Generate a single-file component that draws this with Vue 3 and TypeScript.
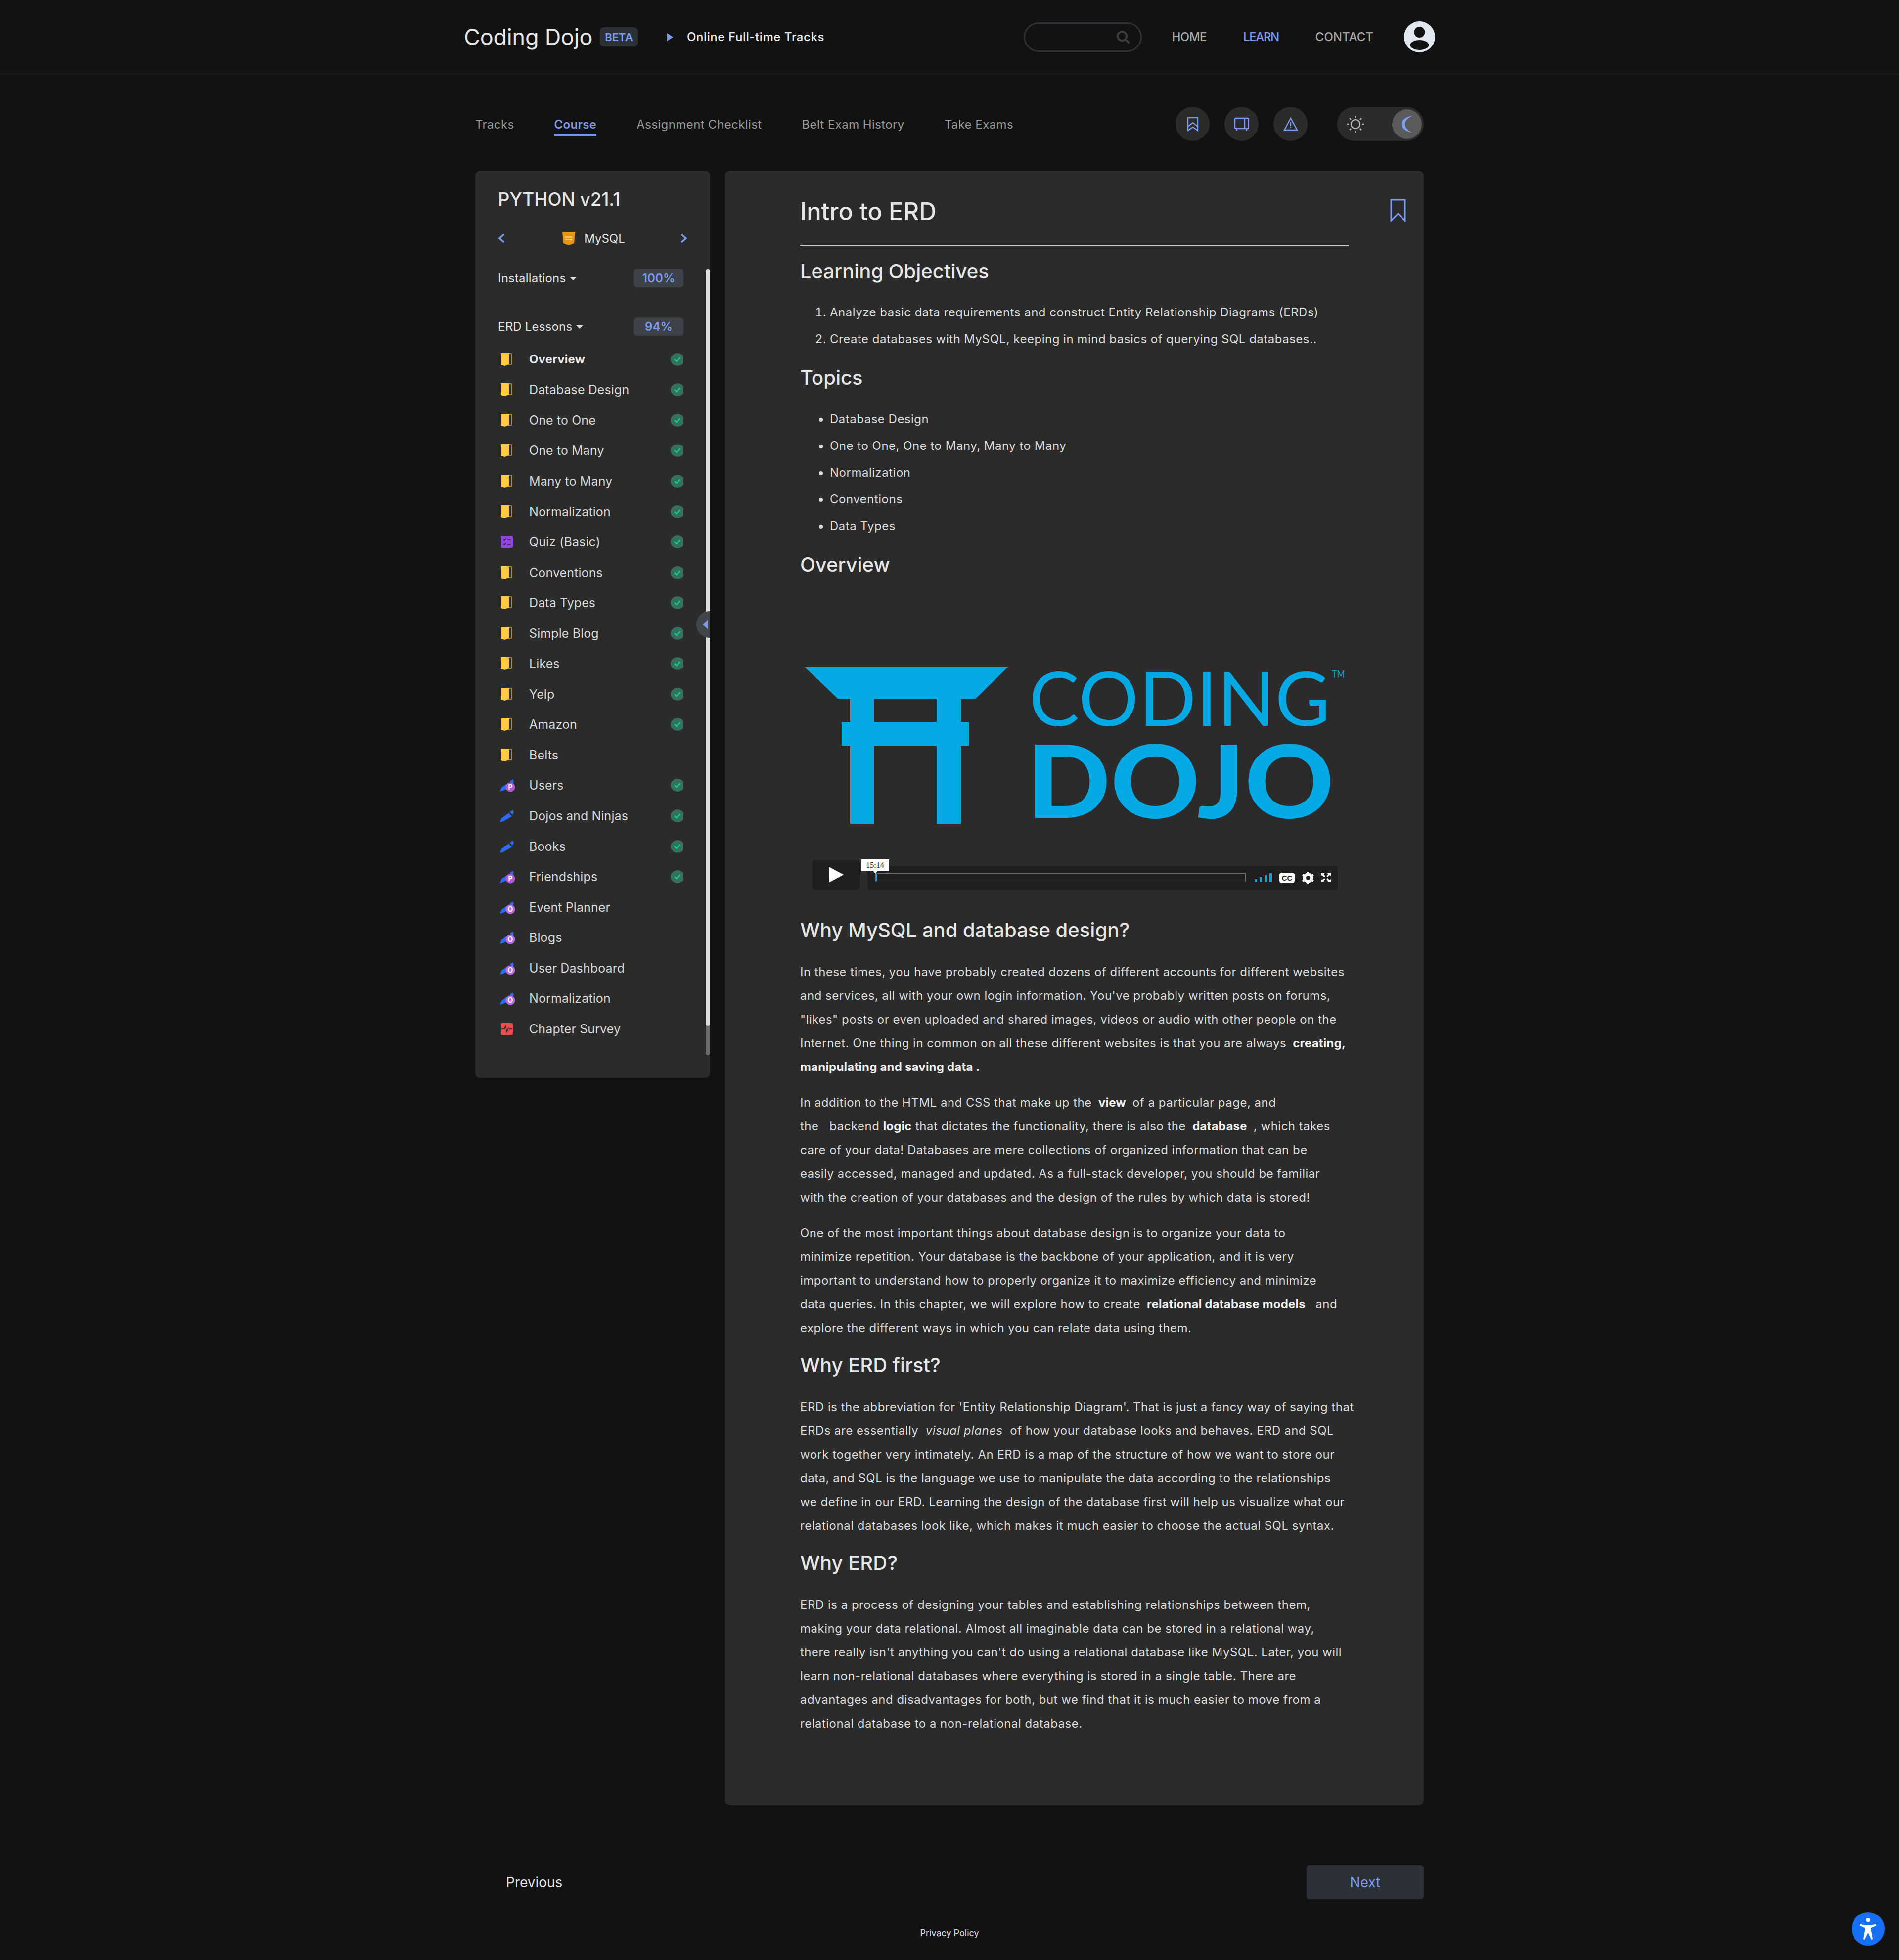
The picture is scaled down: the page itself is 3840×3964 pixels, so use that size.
<script setup lang="ts">
type Kind = 'door' | 'quiz' | 'pen' | 'penP' | 'penO' | 'survey'
interface Lesson { name: string; kind: Kind; done: boolean; active?: boolean }
const lessons: Lesson[] = [
  { name: 'Overview', kind: 'door', done: true, active: true },
  { name: 'Database Design', kind: 'door', done: true },
  { name: 'One to One', kind: 'door', done: true },
  { name: 'One to Many', kind: 'door', done: true },
  { name: 'Many to Many', kind: 'door', done: true },
  { name: 'Normalization', kind: 'door', done: true },
  { name: 'Quiz (Basic)', kind: 'quiz', done: true },
  { name: 'Conventions', kind: 'door', done: true },
  { name: 'Data Types', kind: 'door', done: true },
  { name: 'Simple Blog', kind: 'door', done: true },
  { name: 'Likes', kind: 'door', done: true },
  { name: 'Yelp', kind: 'door', done: true },
  { name: 'Amazon', kind: 'door', done: true },
  { name: 'Belts', kind: 'door', done: false },
  { name: 'Users', kind: 'penP', done: true },
  { name: 'Dojos and Ninjas', kind: 'pen', done: true },
  { name: 'Books', kind: 'pen', done: true },
  { name: 'Friendships', kind: 'penP', done: true },
  { name: 'Event Planner', kind: 'penO', done: false },
  { name: 'Blogs', kind: 'penO', done: false },
  { name: 'User Dashboard', kind: 'penO', done: false },
  { name: 'Normalization', kind: 'penO', done: false },
  { name: 'Chapter Survey', kind: 'survey', done: false },
]
const tabs = ['Tracks', 'Course', 'Assignment Checklist', 'Belt Exam History', 'Take Exams']
const topics = ['Database Design', 'One to One, One to Many, Many to Many', 'Normalization', 'Conventions', 'Data Types']
</script>

<template>
  <div class="page">
    <header class="topbar">
      <div class="topbar-in">
        <span class="brand">Coding Dojo</span>
        <span class="beta">BETA</span>
        <svg class="crumb" width="12" height="16" viewBox="0 0 12 16"><path d="M0 0 L12 8 L0 16Z" fill="#7c9cf0" /></svg>
        <span class="track">Online Full-time Tracks</span>
        <div class="spacer"></div>
        <div class="search">
          <svg width="28" height="28" viewBox="0 0 28 28" fill="none" stroke="#3d3d3d" stroke-width="4"><circle cx="12" cy="12" r="9" /><path d="M19 19 L26 26" /></svg>
        </div>
        <nav class="nav">
          <span class="home">HOME</span><span class="on">LEARN</span><span>CONTACT</span>
        </nav>
        <svg class="avatar" width="63" height="63" viewBox="0 0 63 63"><circle cx="31.5" cy="31.5" r="31.5" fill="#e2e8f2" /><circle cx="31.5" cy="22" r="11" fill="#121212" /><ellipse cx="31.5" cy="48" rx="19" ry="10" fill="#121212" /></svg>
      </div>
    </header>

    <div class="wrap">
      <div class="tabs">
        <span v-for="t in tabs" :key="t" class="tab" :class="{ cur: t === 'Course' }">{{ t }}</span>
        <div class="spacer"></div>
        <div class="round">
          <svg width="24" height="30" viewBox="0 0 24 30" fill="none" stroke="#7c9cf0" stroke-width="2.4"><path d="M2 2 H22 V28 L12 21 L2 28Z" /><path d="M2 20 L12 12 L22 20" /></svg>
        </div>
        <div class="round">
          <svg width="30" height="28" viewBox="0 0 30 28" fill="none" stroke="#7c9cf0" stroke-width="2.4"><rect x="1" y="2" width="28" height="21" rx="2" /><path d="M21 2 V23 M5 23 V27 M25 23 V27" /></svg>
        </div>
        <div class="round">
          <svg width="30" height="28" viewBox="0 0 30 28" fill="none" stroke="#7c9cf0" stroke-width="2.4"><path d="M15 2 L28 26 H2Z" /><path d="M15 10 V18 M15 20 V22" /></svg>
        </div>
        <div class="toggle">
          <svg width="36" height="36" viewBox="0 0 36 36" fill="none" stroke="#b5b5b5" stroke-width="2.5"><circle cx="18" cy="18" r="9" /><path d="M18 1 V5 M18 31 V35 M1 18 H5 M31 18 H35 M6 6 L9 9 M27 27 L30 30 M30 6 L27 9 M6 30 L9 27" /></svg>
          <div class="knob">
            <svg width="24" height="36" viewBox="0 0 24 36"><path d="M23 1 C9 3 1 10 1 18 C1 26 9 33 22 35 C14 30 8 25 8 18 C8 11 14 6 23 1Z" fill="#7c9cf0" /></svg>
          </div>
        </div>
      </div>

      <div class="columns">
        <aside class="side">
          <h2 class="course">PYTHON v21.1</h2>
          <div class="chapter">
            <svg width="14" height="20" viewBox="0 0 14 20" fill="none" stroke="#7c9cf0" stroke-width="3.5"><path d="M12 2 L3 10 L12 18" /></svg>
            <div class="chapter-name">
              <svg width="26" height="27" viewBox="0 0 26 27"><path d="M0 0 H26 L24 23 L13 27 L2 23Z" fill="#e8960f" /><rect x="6" y="9" width="14" height="3" fill="#f3c880" /><rect x="6" y="14" width="14" height="3" fill="#f3c880" /></svg>
              <span>MySQL</span>
            </div>
            <svg width="14" height="20" viewBox="0 0 14 20" fill="none" stroke="#7c9cf0" stroke-width="3.5"><path d="M2 2 L11 10 L2 18" /></svg>
          </div>
          <div class="sect sect-first">
            <span class="sect-name">Installations <i class="caret"></i></span>
            <span class="pct">100%</span>
          </div>
          <div class="sect sect-second">
            <span class="sect-name">ERD Lessons <i class="caret"></i></span>
            <span class="pct">94%</span>
          </div>
          <ul class="lessons">
            <li v-for="(l, i) in lessons" :key="i" class="lesson" :class="{ active: l.active }">
              <span class="ico">
                <svg v-if="l.kind === 'door'" class="ico-door" width="22" height="28" viewBox="0 0 22 28"><path d="M15 2 H21 V24 H15" fill="none" stroke="#d9a92e" stroke-width="1.5" /><path d="M0 1 H16 V24 L8 27 L0 25Z" fill="#fdcb3e" /></svg>
                <svg v-else-if="l.kind === 'quiz'" class="ico-door" width="24" height="24" viewBox="0 0 24 24"><rect width="24" height="24" rx="2" fill="#9146dc" /><path d="M5 7 L7 9 L10 5 M5 16 L7 18 L10 14" fill="none" stroke="#2f2146" stroke-width="1.5" /><path d="M13 8 H20 M13 17 H20" stroke="#2f2146" stroke-width="1.5" /></svg>
                <svg v-else-if="l.kind === 'survey'" class="ico-door" width="24" height="24" viewBox="0 0 24 24"><rect width="24" height="24" rx="2" fill="#ef4c4f" /><path d="M1 12 H7 L9 6 L12 18 L15 10 L17 12 H23" fill="none" stroke="#2b2b2b" stroke-width="1.6" /></svg>
                <svg v-else width="32" height="28" viewBox="0 0 32 28">
                  <path d="M0 27 L3 19 L18 8 L24 15 L7 25Z M20 6 L26 2 L28 7 L25 12Z" fill="#2a6cf6" />
                  <g v-if="l.kind !== 'pen'">
                    <circle cx="21" cy="18" r="9.5" :fill="l.kind === 'penP' ? '#b05ad6' : '#b96be4'" />
                    <text x="21" y="23" text-anchor="middle" class="ico-letter">{{ l.kind === 'penP' ? 'P' : 'O' }}</text>
                  </g>
                </svg>
              </span>
              <span class="lname">{{ l.name }}</span>
              <span v-if="l.done" class="check">
                <svg width="14" height="12" viewBox="0 0 14 12" fill="none" stroke="#17d07f" stroke-width="2.6"><path d="M1 6 L5 10 L13 2" /></svg>
              </span>
            </li>
          </ul>
          <div class="sbar"><div class="sbar-thumb"></div></div>
          <div class="handle"><i></i></div>
        </aside>

        <main class="card">
          <svg class="mark" width="32" height="46" viewBox="0 0 32 46" fill="none" stroke="#7c9cf0" stroke-width="3"><path d="M2 2 H30 V44 L16 30 L2 44Z" /></svg>
          <h1>Intro to ERD</h1>
          <hr />
          <h2 class="first">Learning Objectives</h2>
          <ol>
            <li>Analyze basic data requirements and construct Entity Relationship Diagrams (ERDs)</li>
            <li>Create databases with MySQL, keeping in mind basics of querying SQL databases..</li>
          </ol>
          <h2>Topics</h2>
          <ul>
            <li v-for="t in topics" :key="t">{{ t }}</li>
          </ul>
          <h2>Overview</h2>
          <div class="video">
            <svg class="logo" width="1110" height="340" viewBox="0 0 1110 340">
              <g fill="#05a9e3">
                <polygon points="9,10 420,10 355,74 76,74" />
                <rect x="101" y="74" width="49" height="253" />
                <rect x="276" y="74" width="49" height="253" />
                <rect x="84" y="121" width="257" height="48" />
              </g>
              <text x="463" y="129" class="logo-coding" textLength="609" lengthAdjust="spacingAndGlyphs">CODING</text>
              <text x="458" y="315" class="logo-dojo" textLength="622" lengthAdjust="spacingAndGlyphs">DOJO</text>
              <text x="1075" y="32" class="logo-tm" textLength="27" lengthAdjust="spacingAndGlyphs">TM</text>
            </svg>
            <div class="player">
              <div class="play"><svg width="30" height="32" viewBox="0 0 30 32"><path d="M0 0 L30 16 L0 32Z" fill="#fff" /></svg></div>
              <div class="ctrl">
                <div class="scrub"><i></i></div>
                <div class="bars"><b class="b1"></b><b class="b2"></b><b class="b3"></b><b class="b4"></b></div>
                <span class="cc">CC</span>
                <svg class="gear" width="24" height="25" viewBox="0 0 24 25"><circle cx="12" cy="12.5" r="7.5" fill="none" stroke="#fff" stroke-width="5.5" /><path d="M12 0 V25 M1 6 L23 19 M23 6 L1 19" stroke="#fff" stroke-width="4" /><circle cx="12" cy="12.5" r="4" fill="#1f1f1f" /></svg>
                <svg class="full" width="20" height="18" viewBox="0 0 18 18" preserveAspectRatio="none" fill="#fff"><path d="M0 0 H7 L5 2 L8 6 L6 8 L2 4 L0 6Z M18 0 H11 L13 2 L10 6 L12 8 L16 4 L18 6Z M0 18 H7 L5 16 L8 12 L6 10 L2 14 L0 12Z M18 18 H11 L13 16 L10 12 L12 10 L16 14 L18 12Z" /></svg>
              </div>
              <div class="tip">15:14</div>
            </div>
          </div>
          <h2 class="after-video">Why MySQL and database design?</h2>
          <p>In these times, you have probably created dozens of different accounts for different websites<br />and services, all with your own login information. You've probably written posts on forums,<br />"likes" posts or even uploaded and shared images, videos or audio with other people on the<br />Internet. One thing in common on all these different websites is that you are always <b>&nbsp;creating,</b><br /><b>manipulating and saving data .</b></p>
          <p>In addition to the HTML and CSS that make up the <b>&nbsp;view&nbsp;</b> of a particular page, and<br />the &nbsp; backend <b>logic</b> that dictates the functionality, there is also the <b>&nbsp;database&nbsp;</b> , which takes<br />care of your data! Databases are mere collections of organized information that can be<br />easily accessed, managed and updated. As a full-stack developer, you should be familiar<br />with the creation of your databases and the design of the rules by which data is stored!</p>
          <p>One of the most important things about database design is to organize your data to<br />minimize repetition. Your database is the backbone of your application, and it is very<br />important to understand how to properly organize it to maximize efficiency and minimize<br />data queries. In this chapter, we will explore how to create <b>&nbsp;relational database models&nbsp;</b> &nbsp;and<br />explore the different ways in which you can relate data using them.</p>
          <h2>Why ERD first?</h2>
          <p>ERD is the abbreviation for 'Entity Relationship Diagram'. That is just a fancy way of saying that<br />ERDs are essentially <em>&nbsp;visual planes&nbsp;</em> of how your database looks and behaves. ERD and SQL<br />work together very intimately. An ERD is a map of the structure of how we want to store our<br />data, and SQL is the language we use to manipulate the data according to the relationships<br />we define in our ERD. Learning the design of the database first will help us visualize what our<br />relational databases look like, which makes it much easier to choose the actual SQL syntax.</p>
          <h2>Why ERD?</h2>
          <p>ERD is a process of designing your tables and establishing relationships between them,<br />making your data relational. Almost all imaginable data can be stored in a relational way,<br />there really isn't anything you can't do using a relational database like MySQL. Later, you will<br />learn non-relational databases where everything is stored in a single table. There are<br />advantages and disadvantages for both, but we find that it is much easier to move from a<br />relational database to a non-relational database.</p>
        </main>
      </div>

      <div class="pager">
        <span class="prev">Previous</span>
        <span class="next">Next</span>
      </div>
      <footer class="foot">Privacy Policy</footer>
    </div>

    <div class="a11y">
      <svg width="33" height="44" viewBox="0 0 33 44" fill="#fff"><ellipse cx="16.5" cy="4" rx="4" ry="4.5" /><path d="M0 12 C5 14 10 15 12 15 H21 C23 15 28 14 33 12 L33 16 L23 20 V26 L26 43 L23.5 44 L16.5 30 L9.5 44 L7 43 L10 26 V20 L0 16Z" /></svg>
    </div>
  </div>
</template>

<style scoped>
.page {
  position: relative;
  min-height: 3964px;
  background: #121212;
  color: #e2e2e2;
  font-family: Inter, "Noto Sans", sans-serif;
  overflow: hidden;
}
.spacer { flex: 1; }
.topbar { height: 150px; border-bottom: 1px solid #242424; box-sizing: border-box; }
.topbar-in {
  width: 1964px;
  margin: 0 auto;
  height: 149px;
  display: flex;
  align-items: center;
}
.brand { font-size: 45px; letter-spacing: -0.2px; color: #e6e6e6; width: 275px; white-space: nowrap; }
.beta {
  width: 77px; height: 39px; border-radius: 8px; background: #2b2f36; color: #7c9cf0;
  font-size: 22px; font-weight: 600; display: flex; align-items: center; justify-content: center;
}
.crumb { margin-left: 59px; }
.track { margin-left: 28px; font-size: 24px; font-weight: 500; color: #eee; letter-spacing: 0.6px; }
.search {
  width: 239px; height: 60px; border: 3px solid #2e3136; border-radius: 30px; box-sizing: border-box;
  display: flex; align-items: center; justify-content: flex-end; padding-right: 21px;
}
.nav { display: flex; gap: 74px; margin-left: 60px; font-size: 24px; font-weight: 500; color: #a8a8a8; }
.nav .home { letter-spacing: -0.5px; }
.nav .on { color: #7c9cf0; letter-spacing: -1.4px; }
.avatar { margin-left: 62px; }

.wrap { width: 1918px; margin: 0 auto; }
.tabs { display: flex; align-items: center; height: 69px; margin-top: 66px; }
.tab {
  margin-right: 81px; font-size: 24px; letter-spacing: 0.4px; color: #9a9a9a; height: 40px; line-height: 36px; position: relative;
  box-sizing: border-box; margin-top: 6px;
}
.tab.cur { color: #7c9cf0; font-weight: 600; letter-spacing: 0.3px; }
.tab.cur::after { content: ""; position: absolute; left: 0; right: 0; bottom: -1px; height: 3px; background: #7c9cf0; }
.round {
  width: 69px; height: 69px; border-radius: 50%; background: #2b2b2b; margin-left: 30px;
  display: flex; align-items: center; justify-content: center;
}
.toggle {
  width: 175px; height: 69px; border-radius: 35px; background: #2b2b2b; margin-left: 60px;
  display: flex; align-items: center; justify-content: space-between; padding: 0 4px 0 19px; box-sizing: border-box;
}
.knob {
  width: 60px; height: 60px; border-radius: 50%; background: #5a5a5a;
  display: flex; align-items: center; justify-content: center;
}
.columns { display: flex; gap: 30px; align-items: flex-start; margin-top: 60px; }
.side {
  position: relative; width: 475px; height: 1835px; background: #2b2b2b; border-radius: 10px;
  padding: 0 54px 0 46px; box-sizing: border-box; flex: none;
}
.course { margin: 0; padding-top: 33px; font-size: 36.5px; line-height: 50px; font-weight: 500; color: #e6e6e6; white-space: nowrap; }
.chapter { display: flex; align-items: center; justify-content: space-between; margin-top: 34px; height: 40px; width: 383px; }
.chapter-name { display: flex; align-items: center; gap: 18px; font-size: 24px; color: #e6e6e6; margin-left: 4px; }
.sect { display: flex; align-items: center; justify-content: space-between; height: 38px; font-size: 24px; letter-spacing: 0.2px; width: 375px; }
.sect-first { margin-top: 41px; }
.sect-second { margin-top: 60px; }
.sect-name { display: flex; align-items: center; gap: 8px; color: #e0e0e0; }
.caret { display: inline-block; width: 0; height: 0; border-left: 7px solid transparent; border-right: 7px solid transparent; border-top: 7px solid #e0e0e0; margin-top: 2px; }
.pct {
  width: 100px; height: 37px; border-radius: 6px; background: #3d4148; color: #7c9cf0;
  font-size: 24px; font-weight: 600; display: flex; align-items: center; justify-content: center;
}
.lessons { list-style: none; margin: 17px 0 0; padding: 0; width: 375px; }
.lesson { display: flex; align-items: center; height: 61.55px; font-size: 25px; letter-spacing: 0.1px; color: #d8d8d8; }
.lesson.active { font-weight: 700; font-size: 24px; color: #e8e8e8; }
.ico { width: 63px; display: flex; justify-content: flex-start; flex: none; padding-left: 4px; box-sizing: border-box; }
.ico-door { margin-left: 2px; }
.lname { flex: 1; white-space: nowrap; }
.check {
  width: 28px; height: 26px; border-radius: 50%; background: #33705f; flex: none; margin-right: -2px;
  display: flex; align-items: center; justify-content: center; clip-path: inset(0 2px 0 0);
}
.ico-letter { font-family: Inter, sans-serif; font-size: 14px; font-weight: 700; fill: #fff; }
.sbar { position: absolute; right: 0; top: 200px; width: 9px; background: #6b6b6b; border-radius: 5px; height: 1589px; }
.sbar-thumb { height: 1530px; background: #e0e0e0; border-radius: 5px; }
.handle {
  position: absolute; right: 0; top: 891px; width: 28px; height: 54px; background: #42454a;
  border-radius: 27px 0 0 27px; display: flex; align-items: center;
}
.handle i { display: block; margin-left: 13px; width: 0; height: 0; border-top: 10px solid transparent; border-bottom: 10px solid transparent; border-right: 11px solid #7c9cf0; }

.card {
  position: relative; flex: none; width: 1413px; background: #2b2b2b; border-radius: 10px; height: 3306px;
  padding: 0 151px 0 152px; box-sizing: border-box; font-size: 24px; letter-spacing: 0.5px; line-height: 48px; color: #dcdcdc;
}
.mark { position: absolute; left: 1345px; top: 57px; }
h1 { margin: 0; padding-top: 49px; font-size: 49px; line-height: 68px; font-weight: 500; color: #e6e6e6; letter-spacing: 0; }
hr { border: 0; height: 2px; background: #c8c8c8; margin: 33px 0 0; }
.card h2 { margin: 25px 0 0; font-size: 40px; line-height: 52px; font-weight: 500; color: #e6e6e6; letter-spacing: 0; }
.card h2.first { margin-top: 26px; }
ol { margin: 30px 0 0; padding: 0 0 0 60px; }
ul { margin: 31px 0 0; padding: 0 0 0 60px; }
.card li { line-height: 54px; }
.card p { margin: 24px 0 0; white-space: nowrap; }
.card h2 + p { margin-top: 35px; }
.card b { color: #f2f2f2; font-weight: 700; letter-spacing: 0.2px; }
.video { margin-top: 36px; position: relative; height: 651px; }
.logo { display: block; position: absolute; left: 0; top: 135px; overflow: visible; }
.logo-coding { font-family: Lato, sans-serif; font-size: 152px; font-weight: 400; fill: #05a9e3; }
.logo-dojo { font-family: Lato, sans-serif; font-size: 205px; font-weight: 900; fill: #05a9e3; }
.logo-tm { font-family: Lato, sans-serif; font-size: 22px; fill: #05a9e3; }
.player { position: absolute; left: 24px; top: 535px; width: 1063px; height: 60px; display: flex; gap: 15px; align-items: flex-end; }
.play {
  width: 97px; height: 60px; background: #1f1f1f; border-radius: 6px; flex: none;
  display: flex; align-items: center; justify-content: center;
}
.ctrl {
  flex: 1; height: 48px; background: #1f1f1f; border-radius: 4px; display: flex; align-items: center;
  padding: 0 14px 0 16px; box-sizing: border-box; letter-spacing: 0;
}
.scrub { width: 749px; height: 18px; border: 1px solid #6a6a6a; box-sizing: border-box; position: relative; flex: none; }
.scrub i { position: absolute; left: 1px; top: 1px; bottom: 1px; width: 1px; background: #05a9e3; }
.bars { display: flex; gap: 5px; align-items: flex-end; height: 18px; margin-left: 18px; width: 35px; flex: none; }
.bars b { display: block; width: 5px; background: #05a9e3; }
.b1 { height: 6px; } .b2 { height: 10px; } .b3 { height: 14px; } .b4 { height: 18px; }
.cc {
  width: 31px; height: 21px; background: #fff; color: #1f1f1f; border-radius: 5px; font-size: 15px; line-height: 21px;
  font-weight: 700; text-align: center; font-family: "Liberation Sans", sans-serif; margin-left: 15px; flex: none;
}
.gear { margin-left: 15px; flex: none; }
.full { margin-left: 14px; flex: none; }
.tip {
  position: absolute; left: 99px; top: -1px; width: 57px; height: 24px; background: #fff; color: #222;
  font: 16px/24px "Liberation Serif", serif; text-align: center; letter-spacing: 0;
}
.tip::after {
  content: ""; position: absolute; left: 25px; top: 24px; border-left: 4px solid transparent; border-right: 4px solid transparent; border-top: 5px solid #fff;
}
.card h2.after-video { margin-top: 0; }

.pager { display: flex; justify-content: space-between; align-items: center; height: 69px; margin-top: 121px; }
.prev { margin-left: 62px; font-size: 28px; color: #e2e2e2; }
.next {
  width: 237px; height: 69px; border-radius: 6px; background: #2b2f36; color: #7c9cf0; font-size: 28px;
  display: flex; align-items: center; justify-content: center;
}
.foot { text-align: center; font-size: 18px; margin-top: 58px; color: #e2e2e2; }
.a11y {
  position: absolute; left: 3744px; top: 3867px; width: 67px; height: 68px; border-radius: 50%; background: #1570f5;
  display: flex; align-items: center; justify-content: center;
}
</style>
